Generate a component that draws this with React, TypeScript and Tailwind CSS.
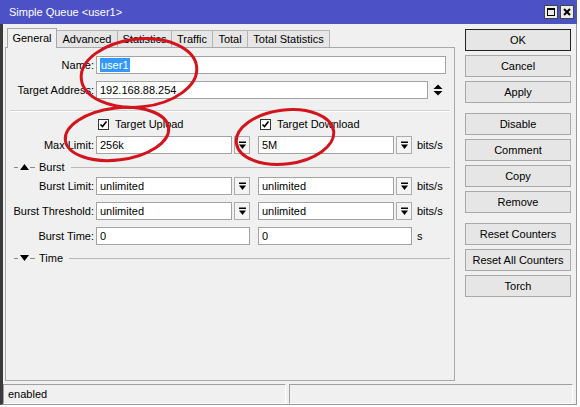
import React from 'react';

const tabs = [
  { name: 'General', w: 'w-[50px]' },
  { name: 'Advanced', w: 'w-[61px]' },
  { name: 'Statistics', w: 'w-[54px]' },
  { name: 'Traffic', w: 'w-[41px]' },
  { name: 'Total', w: 'w-[35px]' },
  { name: 'Total Statistics', w: 'w-[82px]' },
];

const buttonGroups = [
  ['OK', 'Cancel', 'Apply'],
  ['Disable', 'Comment', 'Copy', 'Remove'],
  ['Reset Counters', 'Reset All Counters', 'Torch'],
];

function Field({ value, className = '' }: { value: React.ReactNode; className?: string }) {
  return (
    <div
      className={`h-[18px] border border-[#a3a3a3] bg-white flex items-center pl-[3px] overflow-hidden whitespace-nowrap ${className}`}
    >
      {value}
    </div>
  );
}

function DropButton() {
  return (
    <div className="w-[16px] h-[18px] ml-[2px] border border-[#acacac] bg-[#f4f4f4] flex items-center justify-center">
      <svg width="9" height="9" viewBox="0 0 9 9">
        <rect x="1" y="0.5" width="7" height="1.5" fill="#000" />
        <path d="M1 3.5h7L4.5 8z" fill="#000" />
      </svg>
    </div>
  );
}

function Row({ label, children }: { label: string; children: React.ReactNode }) {
  return (
    <div className="flex items-center h-[18px]">
      <div className="w-[90px] text-right pr-[2px] whitespace-nowrap">{label}</div>
      {children}
    </div>
  );
}

function Checkbox({ label }: { label: string }) {
  return (
    <div className="flex items-center">
      <div className="w-[11px] h-[11px] border border-[#333] bg-white flex items-center justify-center">
        <svg width="9" height="9" viewBox="0 0 9 9">
          <path d="M1.5 4.5l2 2 4-5" fill="none" stroke="#000" strokeWidth="1.6" />
        </svg>
      </div>
      <span className="ml-[6px]">{label}</span>
    </div>
  );
}

function Section({ label, open }: { label: string; open: boolean }) {
  return (
    <div className="flex items-center h-[12px] ml-[8px] mr-[4px]">
      <div className="w-[4px] h-px bg-[#8a8a8a]" />
      <svg width="9" height="6" viewBox="0 0 9 6" className="ml-[2px]">
        {open ? <path d="M0 6h9L4.5 0z" fill="#000" /> : <path d="M0 0h9L4.5 6z" fill="#000" />}
      </svg>
      <div className="w-[5px] h-px bg-[#8a8a8a] ml-px" />
      <span className="ml-[4px]">{label}</span>
      <div className="flex-1 h-px bg-[#b8b8b8] ml-[6px]" />
    </div>
  );
}

function LimitRow({ label, a, b }: { label: string; a: string; b: string }) {
  return (
    <Row label={label}>
      <Field value={a} className="w-[136px]" />
      <DropButton />
      <Field value={b} className="w-[136px] ml-[8px]" />
      <DropButton />
      <span className="ml-[5px]">bits/s</span>
    </Row>
  );
}

export default function App() {
  return (
    <div className="relative w-[580px] h-[407px] bg-white font-['Liberation_Sans',Arial,sans-serif] text-[11px] text-black overflow-hidden">
      <div className="w-[577px] h-[405px] bg-[#f0f0f0] flex flex-col">
        {/* Title bar */}
        <div className="h-[24px] bg-[#4c51c6] flex items-center pl-[9px] pr-[3px] text-white">
          <span className="flex-1">Simple Queue &lt;user1&gt;</span>
          <div className="flex gap-[2px]">
            <div className="w-[14px] h-[14px] bg-[#ececec] border border-[#444] flex items-center justify-center">
              <div className="w-[8px] h-[8px] border border-black border-t-2" />
            </div>
            <div className="w-[14px] h-[14px] bg-[#ececec] border border-[#444] flex items-center justify-center">
              <svg width="8" height="8" viewBox="0 0 8 8">
                <path d="M1 1l6 6M7 1L1 7" stroke="#000" strokeWidth="2" />
              </svg>
            </div>
          </div>
        </div>

        <div className="flex-1 flex flex-col border-l-[3px] border-l-[#3a3a3a] border-r border-r-[#9a9a9a] border-b border-b-[#9a9a9a]">
          <div className="flex pt-[4px]">
            {/* Tabs + panel */}
            <div className="w-[450px] ml-[2px] flex flex-col">
              <div className="flex h-[19px] items-end pl-[2px]">
                {tabs.map((t, i) =>
                  i === 0 ? (
                    <div
                      key={t.name}
                      className={`${t.w} h-[20px] -mb-px relative z-10 bg-[#f0f0f0] border border-b-0 border-[#a8a8a8] flex items-center justify-center`}
                    >
                      {t.name}
                    </div>
                  ) : (
                    <div
                      key={t.name}
                      className={`${t.w} h-[17px] bg-[#e6e6e6] border border-l-0 border-b-0 border-[#b4b4b4] flex items-center justify-center`}
                    >
                      {t.name}
                    </div>
                  ),
                )}
              </div>
              <div className="h-[334px] border border-[#a8a8a8] flex flex-col">
                <div className="mt-[8px]">
                  <Row label="Name:">
                    <Field
                      value={<span className="bg-[#3399ff] text-white px-px leading-[14px]">user1</span>}
                      className="w-[350px] pl-[1px]"
                    />
                  </Row>
                </div>
                <div className="mt-[7px]">
                  <Row label="Target Address:">
                    <Field value="192.168.88.254" className="w-[332px]" />
                    <svg width="10" height="12" viewBox="0 0 10 12" className="ml-[5px]">
                      <path d="M0.5 5h9L5 0.5z" fill="#000" />
                      <path d="M0.5 7h9L5 11.5z" fill="#000" />
                    </svg>
                  </Row>
                </div>
                <div className="mt-[11px] mx-[4px] h-px bg-[#d0d0d0]" />
                <div className="mx-[4px] h-px bg-white" />
                <div className="mt-[6px] h-[13px] flex items-center">
                  <div className="w-[90px]" />
                  <div className="w-[162px] pl-[2px]">
                    <Checkbox label="Target Upload" />
                  </div>
                  <div className="pl-[2px]">
                    <Checkbox label="Target Download" />
                  </div>
                </div>
                <div className="mt-[5px]">
                  <LimitRow label="Max Limit:" a="256k" b="5M" />
                </div>
                <div className="mt-[7px]">
                  <Section label="Burst" open />
                </div>
                <div className="mt-[4px]">
                  <LimitRow label="Burst Limit:" a="unlimited" b="unlimited" />
                </div>
                <div className="mt-[7px]">
                  <LimitRow label="Burst Threshold:" a="unlimited" b="unlimited" />
                </div>
                <div className="mt-[7px]">
                  <Row label="Burst Time:">
                    <Field value="0" className="w-[154px]" />
                    <Field value="0" className="w-[154px] ml-[8px]" />
                    <span className="ml-[5px]">s</span>
                  </Row>
                </div>
                <div className="mt-[7px]">
                  <Section label="Time" open={false} />
                </div>
              </div>
            </div>

            {/* Buttons */}
            <div className="w-[106px] ml-[10px] pt-[1px] flex flex-col gap-[10px]">
              {buttonGroups.map((g, gi) => (
                <div key={gi} className="flex flex-col gap-[4px]">
                  {g.map((b) => (
                    <div
                      key={b}
                      className={`h-[22px] flex items-center justify-center bg-[#e6e6e6] border ${
                        b === 'OK' ? 'border-[#222]' : 'border-[#a8a8a8]'
                      }`}
                    >
                      {b}
                    </div>
                  ))}
                </div>
              ))}
            </div>
          </div>

          {/* Status bar */}
          <div className="flex gap-[3px] h-[20px] mt-[3px] mr-[3px]">
            <div className="w-[283px] border border-t-[#a0a0a0] border-l-[#a0a0a0] border-r-white border-b-white flex items-center pl-[4px]">
              enabled
            </div>
            <div className="flex-1 border border-t-[#a0a0a0] border-l-[#a0a0a0] border-r-white border-b-white" />
          </div>
        </div>
      </div>

      {/* Red annotation ellipses */}
      <svg className="absolute inset-0 pointer-events-none" width="580" height="407" viewBox="0 0 580 407">
        <g fill="none" stroke="#d2141c" strokeWidth="3">
          <ellipse cx="139" cy="73" rx="58" ry="34" transform="rotate(-6 139 73)" />
          <ellipse cx="117" cy="134" rx="52" ry="26" transform="rotate(-7 117 134)" />
          <ellipse cx="285" cy="137" rx="49" ry="27" transform="rotate(-7 285 137)" />
        </g>
      </svg>
    </div>
  );
}
